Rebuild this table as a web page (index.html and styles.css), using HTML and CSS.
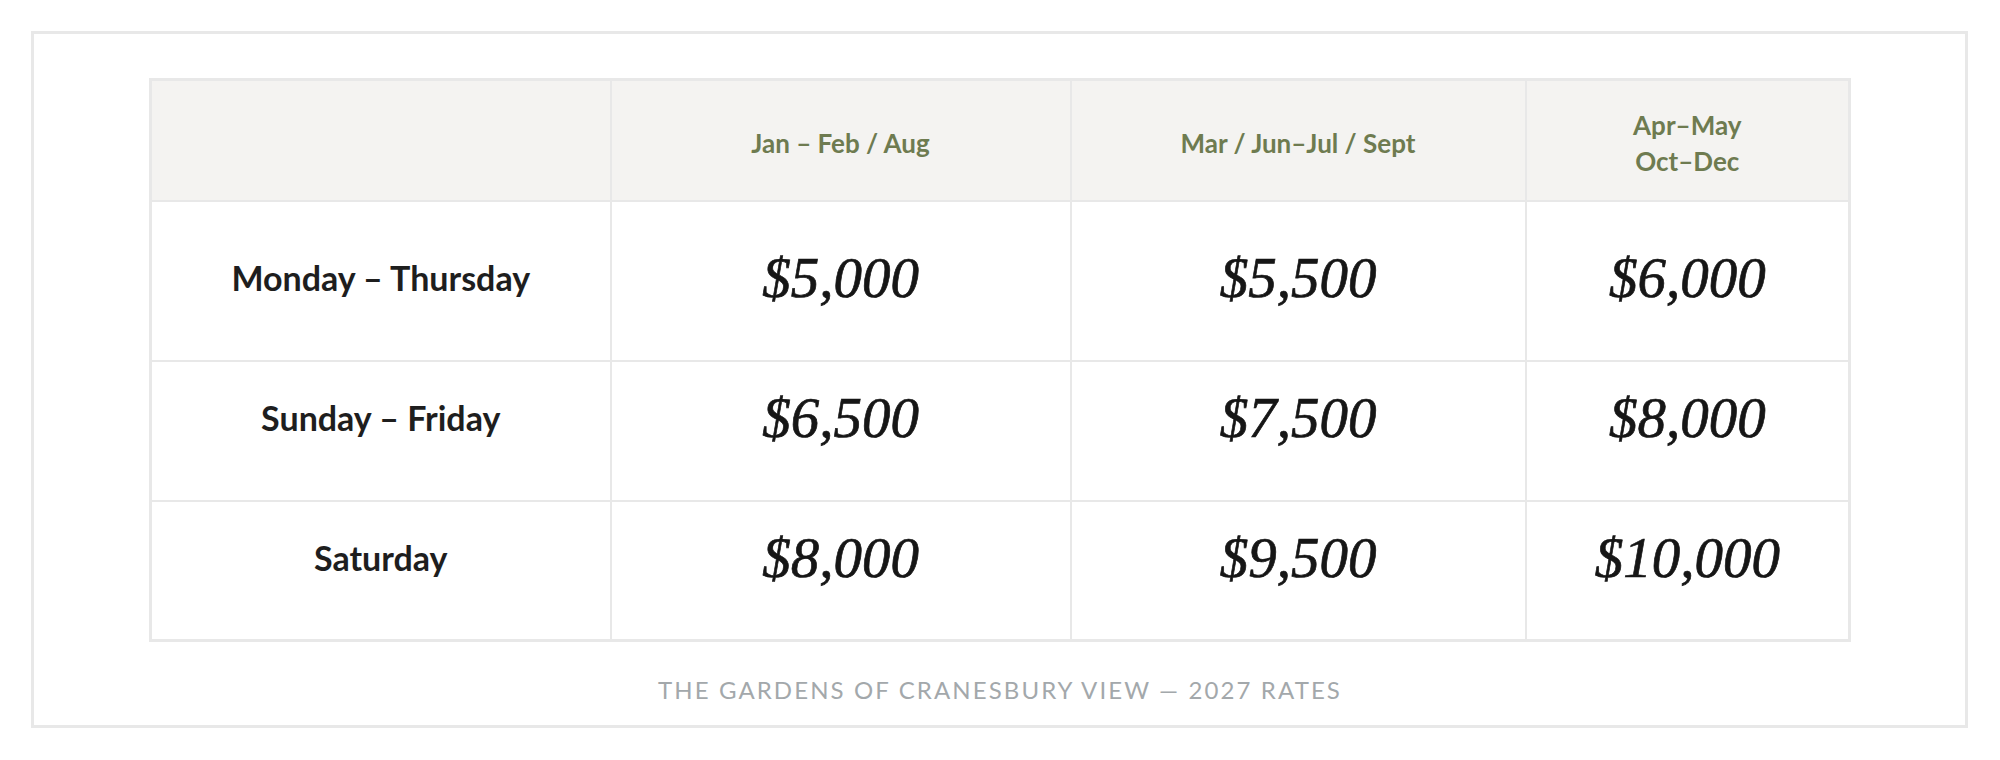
FILE: index.html
```html
<!DOCTYPE html>
<html lang="en">
<head>
<meta charset="utf-8">
<title>The Gardens of Cranesbury View — 2027 Rates</title>
<link rel="stylesheet" href="styles.css">
</head>
<body>
<div class="frame">
  <table class="rates">
    <colgroup>
      <col class="c-day">
      <col class="c-a">
      <col class="c-b">
      <col class="c-c">
    </colgroup>
    <thead>
      <tr class="head-row">
        <th></th>
        <th>Jan – Feb / Aug</th>
        <th>Mar / Jun–Jul / Sept</th>
        <th>Apr–May<br>Oct–Dec</th>
      </tr>
    </thead>
    <tbody>
      <tr class="row-tall">
        <td class="day">Monday – Thursday</td>
        <td class="price">$5,000</td>
        <td class="price">$5,500</td>
        <td class="price">$6,000</td>
      </tr>
      <tr class="row">
        <td class="day">Sunday – Friday</td>
        <td class="price">$6,500</td>
        <td class="price">$7,500</td>
        <td class="price">$8,000</td>
      </tr>
      <tr class="row">
        <td class="day">Saturday</td>
        <td class="price">$8,000</td>
        <td class="price">$9,500</td>
        <td class="price">$10,000</td>
      </tr>
    </tbody>
  </table>
  <p class="caption">The Gardens of Cranesbury View — 2027 Rates</p>
</div>
</body>
</html>
```

FILE: styles.css
```css
html, body {
  margin: 0;
  padding: 0;
  background: #ffffff;
}

body {
  padding: 31px 32px 31px 31px;
  font-family: "Lato", "Liberation Sans", sans-serif;
}

.frame {
  border: 3px solid #e8e8e8;
  padding: 44px 114px 20px 115px;
  height: 697px;
  box-sizing: border-box;
}

.rates {
  width: 100%;
  table-layout: fixed;
  border-collapse: collapse;
  border: 3px solid #e8e8e8;
}

.c-day { width: 460px; }
.c-a { width: 460px; }
.c-b { width: 455px; }

.rates th,
.rates td {
  border: 2px solid #e8e8e8;
  text-align: center;
  vertical-align: middle;
  padding: 0;
}

.head-row {
  height: 121px;
  background: #f4f3f1;
}

.head-row th {
  font-weight: 700;
  font-size: 26px;
  line-height: 36px;
  color: #6e7b50;
  padding-top: 6px;
}

.row-tall { height: 160px; }
.row { height: 140px; }

.row-tall td { padding-bottom: 6px; }
.row td { padding-bottom: 26px; }

.day {
  font-weight: 700;
  font-size: 34px;
  color: #1e1e1e;
}

.price {
  font-family: "Liberation Serif", "Times New Roman", serif;
  font-style: italic;
  font-weight: 400;
  font-size: 57px;
  color: #161616;
  -webkit-text-stroke: 0.7px #161616;
}

.caption {
  margin: 33px 0 0;
  text-align: center;
  text-transform: uppercase;
  font-size: 24px;
  line-height: 30px;
  letter-spacing: 2.1px;
  color: #a3a8ab;
}
```
